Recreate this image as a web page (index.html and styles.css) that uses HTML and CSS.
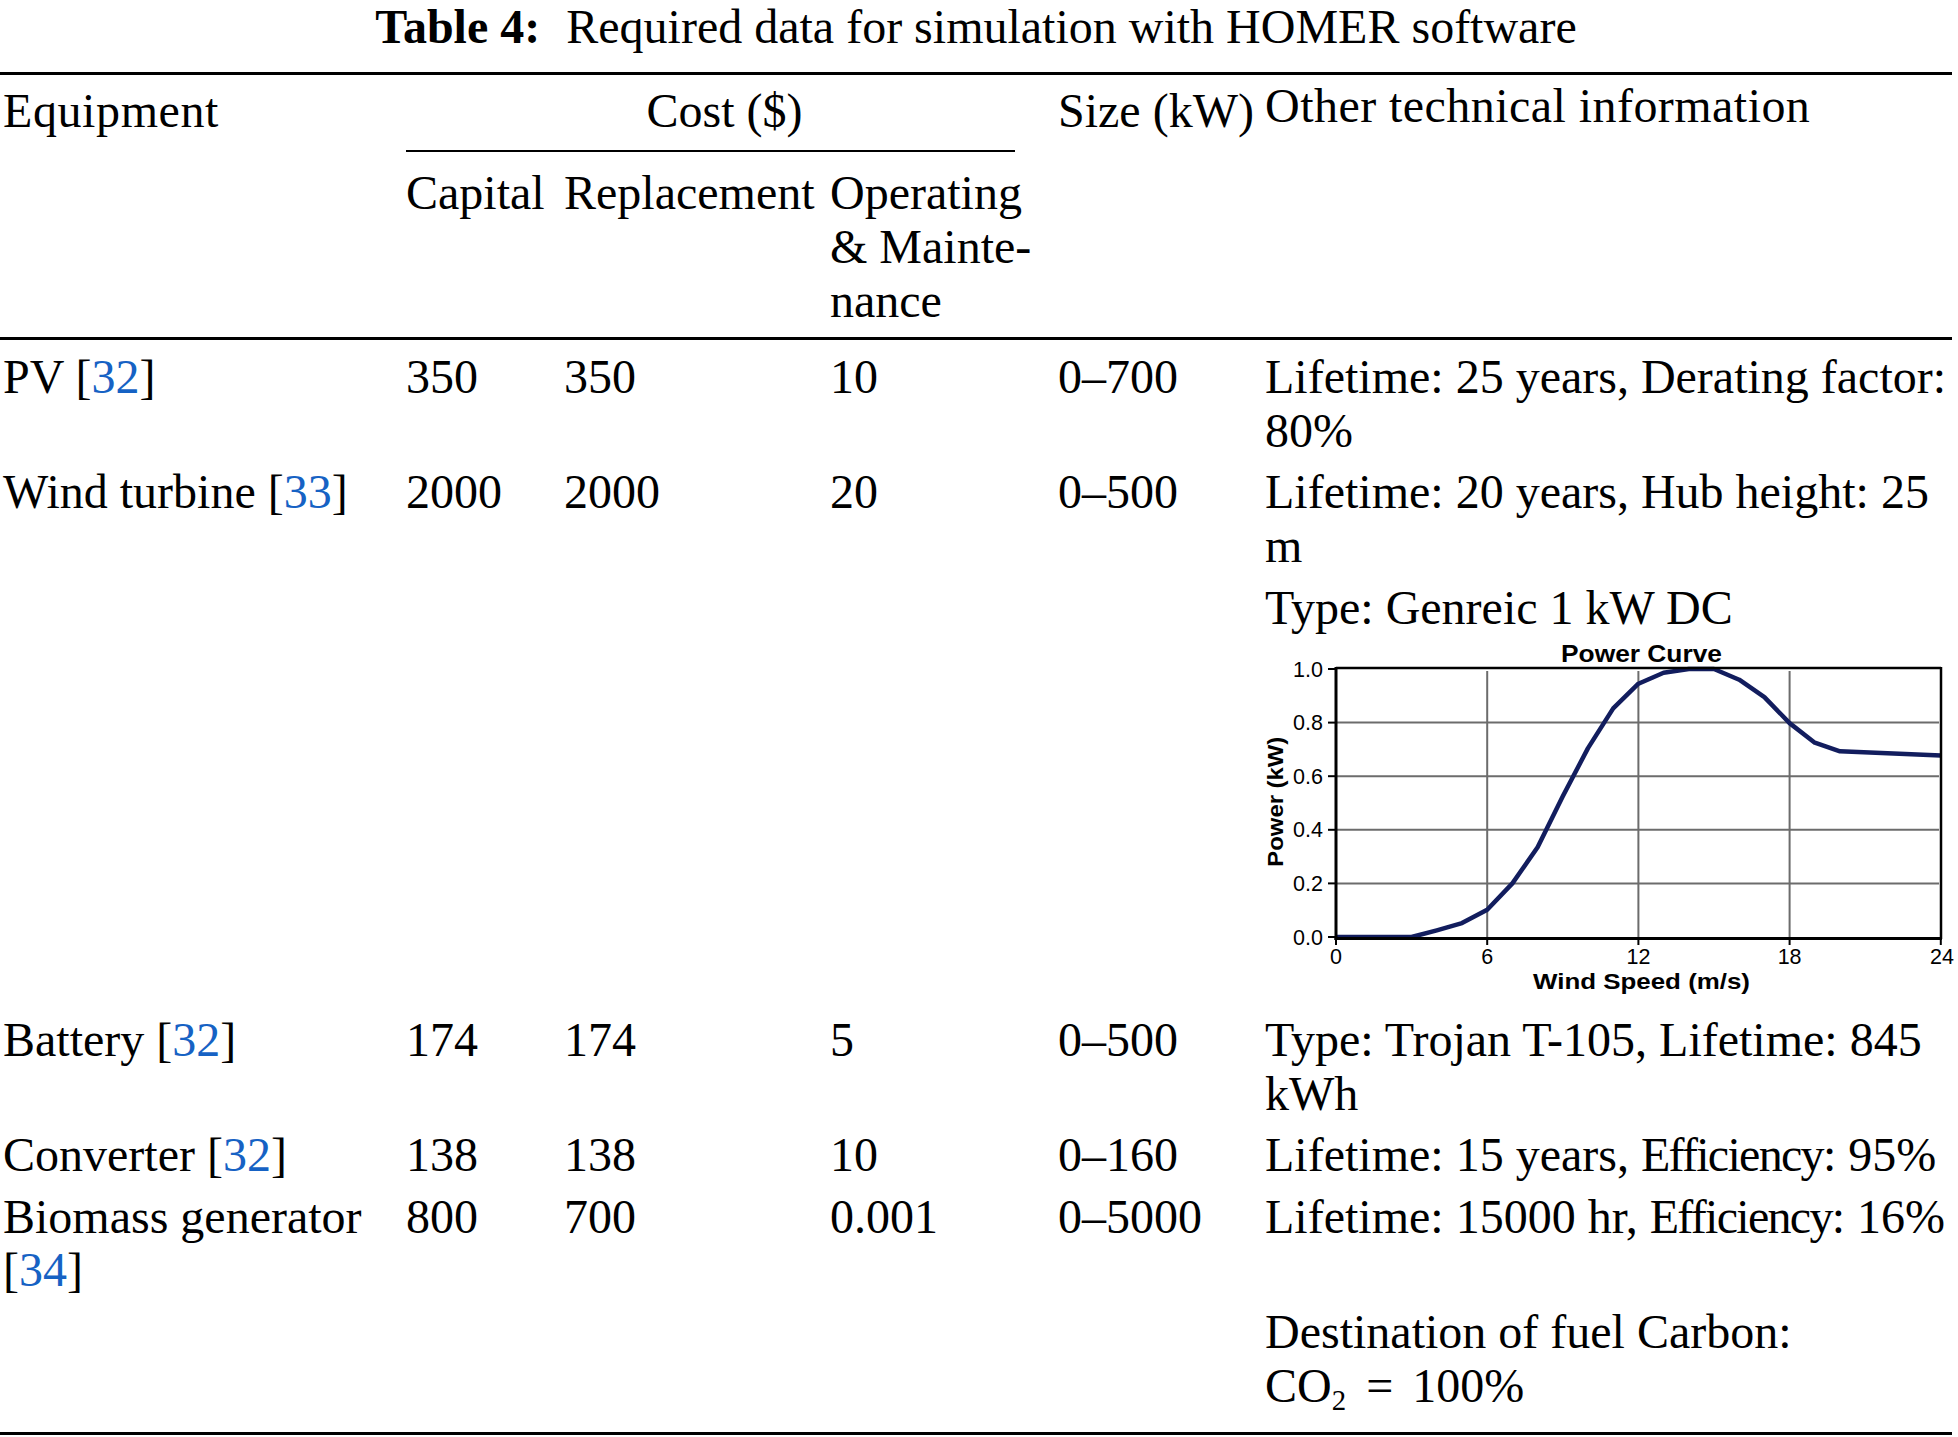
FILE: index.html
```html
<!DOCTYPE html>
<html lang="en">
<head>
<meta charset="utf-8">
<title>Table 4: Required data for simulation with HOMER software</title>
<link rel="stylesheet" href="styles.css">
</head>
<body>
<table class="data-table">
  <caption><b>Table 4:</b><span class="cap-text">Required data for simulation with HOMER software</span></caption>
  <colgroup>
    <col class="w-equip"><col class="w-cap"><col class="w-rep"><col class="w-op"><col class="w-size"><col class="w-other">
  </colgroup>
  <thead>
    <tr class="r1">
      <th class="c-equip" rowspan="2"><span class="equip-head">Equipment</span></th>
      <th colspan="3"><div class="cost-label">Cost ($)</div></th>
      <th rowspan="2">Size (kW)</th>
      <th class="c-other" rowspan="2"><span class="other-head">Other technical information</span></th>
    </tr>
    <tr class="r2">
      <th>Capital</th>
      <th>Replacement</th>
      <th>Operating<br>&amp; Mainte-<br>nance</th>
    </tr>
  </thead>
  <tbody>
    <tr>
      <td class="c-equip">PV [<span class="ref">32</span>]</td>
      <td>350</td><td>350</td><td>10</td><td>0–700</td>
      <td><div class="para">Lifetime: 25 years, Derating factor:<br>80%</div></td>
    </tr>
    <tr>
      <td class="c-equip">Wind turbine [<span class="ref">33</span>]</td>
      <td>2000</td><td>2000</td><td>20</td><td>0–500</td>
      <td>
        <div class="para">Lifetime: 20 years, Hub height: 25<br>m</div>
        <div class="para">Type: Genreic 1 kW DC</div>
        <svg class="chart" width="693" height="371" viewBox="0 0 693 371" font-family="Liberation Sans, Arial, sans-serif">
          <text x="296" y="28" font-size="24" font-weight="bold" textLength="161" lengthAdjust="spacingAndGlyphs">Power Curve</text>
          <g stroke="#6c6c6c" stroke-width="2">
            <line x1="222.2" y1="37" x2="222.2" y2="303"/>
            <line x1="373.4" y1="37" x2="373.4" y2="303"/>
            <line x1="524.6" y1="37" x2="524.6" y2="303"/>
            <line x1="71" y1="88.6" x2="674" y2="88.6"/>
            <line x1="71" y1="142.2" x2="674" y2="142.2"/>
            <line x1="71" y1="195.8" x2="674" y2="195.8"/>
            <line x1="71" y1="249.4" x2="674" y2="249.4"/>
          </g>
          <polyline fill="none" stroke="#121d5e" stroke-width="4.5" stroke-linejoin="round" points="71,303 146.6,303 171.8,296.3 197,289.1 222.2,275.7 247.4,249.4 272.6,213.2 297.8,162.3 323,114.1 348.2,74.4 373.4,49.7 398.6,38.8 423.8,35 449,35 474.2,45.7 499.4,63.1 524.6,89.1 549.8,108.7 575,117.3 675.8,121.6"/>
          <g stroke="#000" fill="none">
            <line x1="71" y1="34" x2="676" y2="34" stroke-width="2.5"/>
            <line x1="676" y1="33" x2="676" y2="305" stroke-width="2.5"/>
            <line x1="71" y1="33" x2="71" y2="306" stroke-width="3"/>
            <line x1="69.5" y1="304.5" x2="677" y2="304.5" stroke-width="3"/>
          </g>
          <g stroke="#000" stroke-width="2">
            <line x1="63" y1="35" x2="71" y2="35"/>
            <line x1="63" y1="88.6" x2="71" y2="88.6"/>
            <line x1="63" y1="142.2" x2="71" y2="142.2"/>
            <line x1="63" y1="195.8" x2="71" y2="195.8"/>
            <line x1="63" y1="249.4" x2="71" y2="249.4"/>
            <line x1="63" y1="303" x2="71" y2="303"/>
            <line x1="71" y1="304" x2="71" y2="311"/>
            <line x1="222.2" y1="304" x2="222.2" y2="311"/>
            <line x1="373.4" y1="304" x2="373.4" y2="311"/>
            <line x1="524.6" y1="304" x2="524.6" y2="311"/>
            <line x1="675.8" y1="304" x2="675.8" y2="311"/>
          </g>
          <g font-size="21.5" text-anchor="end" fill="#000">
            <text x="58" y="42.5">1.0</text>
            <text x="58" y="96.1">0.8</text>
            <text x="58" y="149.7">0.6</text>
            <text x="58" y="203.3">0.4</text>
            <text x="58" y="256.9">0.2</text>
            <text x="58" y="310.5">0.0</text>
          </g>
          <g font-size="21.5" text-anchor="middle" fill="#000">
            <text x="71" y="329.5">0</text>
            <text x="222.2" y="329.5">6</text>
            <text x="373.4" y="329.5">12</text>
            <text x="524.6" y="329.5">18</text>
            <text x="677" y="329.5">24</text>
          </g>
          <text x="268" y="355" font-size="22" font-weight="bold" textLength="217" lengthAdjust="spacingAndGlyphs">Wind Speed (m/s)</text>
          <text transform="translate(18,167.7) rotate(-90)" text-anchor="middle" font-size="22" font-weight="bold" textLength="130" lengthAdjust="spacingAndGlyphs">Power (kW)</text>
        </svg>
      </td>
    </tr>
    <tr>
      <td class="c-equip">Battery [<span class="ref">32</span>]</td>
      <td>174</td><td>174</td><td>5</td><td>0–500</td>
      <td><div class="para">Type: Trojan T-105, Lifetime: 845<br>kWh</div></td>
    </tr>
    <tr>
      <td class="c-equip">Converter [<span class="ref">32</span>]</td>
      <td>138</td><td>138</td><td>10</td><td>0–160</td>
      <td><div class="para">Lifetime: 15 years, <span class="tight">Efficiency</span>: 95%</div></td>
    </tr>
    <tr>
      <td class="c-equip">Biomass generator<br>[<span class="ref">34</span>]</td>
      <td>800</td><td>700</td><td>0.001</td><td>0–5000</td>
      <td>
        <div class="para">Lifetime: 15000 hr, <span class="tight">Efficiency</span>: 16%</div>
        <div class="para gap">Destination of fuel Carbon:<br>CO<sub class="sub">2</sub><span class="rel">=</span>100%</div>
      </td>
    </tr>
  </tbody>
</table>
</body>
</html>
```

FILE: styles.css
```css
html, body {
  margin: 0;
  padding: 0;
  background: #ffffff;
}

body {
  font-family: "Liberation Serif", "Times New Roman", serif;
  font-size: 48px;
  line-height: 53.7px;
  color: #000000;
}

.data-table {
  width: 1952px;
  table-layout: fixed;
  border-collapse: separate;
  border-spacing: 0;
  border-top: 3px solid #000;
  border-bottom: 3px solid #000;
}

.data-table caption {
  caption-side: top;
  text-align: center;
  white-space: nowrap;
  line-height: 53.2px;
  padding-bottom: 18.8px;
}

.data-table caption b {
  font-weight: bold;
}

.cap-text {
  margin-left: 26px;
}

.w-equip { width: 406px; }
.w-cap { width: 158px; }
.w-rep { width: 266px; }
.w-op { width: 228px; }
.w-size { width: 207px; }
.w-other { width: 687px; }

.data-table th,
.data-table td {
  padding: 0;
  vertical-align: top;
  text-align: left;
  font-weight: normal;
  white-space: nowrap;
}

.data-table .c-equip {
  padding-left: 3px;
}

.equip-head {
  letter-spacing: 0.6px;
}

.other-head {
  letter-spacing: 0.45px;
}

.data-table thead .r1 th {
  padding-top: 8.5px;
}

.data-table thead .r1 th.c-other {
  padding-top: 3.5px;
}

.cost-label {
  margin-right: 43px;
  padding-left: 28px;
  padding-bottom: 12.8px;
  border-bottom: 2px solid #000;
  text-align: center;
}

.data-table thead .r2 th {
  padding-top: 14.3px;
  padding-bottom: 10px;
}

.data-table tbody td {
  padding-top: 7.8px;
}

.data-table tbody tr:first-child td {
  border-top: 3px solid #000;
  padding-top: 9.7px;
}

.data-table tbody tr:last-child td {
  padding-bottom: 19px;
}

.ref {
  color: #1662c4;
}

.tight {
  letter-spacing: -1.7px;
}

.para + .para {
  margin-top: 7.8px;
}

.para.gap {
  margin-top: 61.8px;
}

.sub {
  font-size: 0.6em;
  line-height: 0;
  vertical-align: -8px;
}

.rel {
  margin: 0 19px 0 20px;
}

.chart {
  display: block;
  overflow: visible;
}
```
